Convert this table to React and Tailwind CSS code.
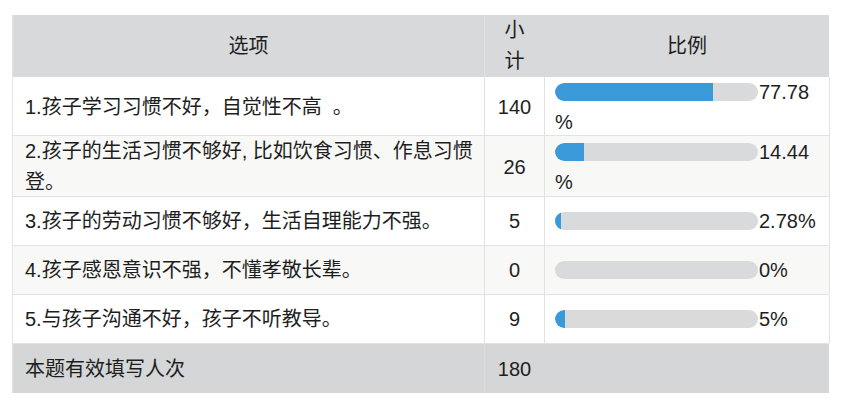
const font = { fontFamily: '"Liberation Sans", "Noto Sans CJK SC", sans-serif' };

const rows = [
  { label: ['1.孩子学习习惯不好，自觉性不高  。'], count: 140, pct: 77.78, text: ['77.78', '%'], h: 'h-[59px]', bg: 'bg-white' },
  { label: ['2.孩子的生活习惯不够好, 比如饮食习惯、作息习惯', '登。'], count: 26, pct: 14.44, text: ['14.44', '%'], h: 'h-[61px]', bg: 'bg-[#f8f8f7]' },
  { label: ['3.孩子的劳动习惯不够好，生活自理能力不强。'], count: 5, pct: 2.78, text: ['2.78%'], h: 'h-[49px]', bg: 'bg-white' },
  { label: ['4.孩子感恩意识不强，不懂孝敬长辈。'], count: 0, pct: 0, text: ['0%'], h: 'h-[49px]', bg: 'bg-[#f8f8f7]' },
  { label: ['5.与孩子沟通不好，孩子不听教导。'], count: 9, pct: 5, text: ['5%'], h: 'h-[49px]', bg: 'bg-white' },
];

const Bar = ({ pct }) => (
  <div className="relative h-[18px] w-[203px] shrink-0 overflow-hidden rounded-full bg-[#d9dadc]">
    {pct > 0 && (
      <div className="absolute inset-y-0 left-0 rounded-l-full bg-[#3a9ad9]" style={{ width: `${pct}%` }} />
    )}
  </div>
);

export default function App() {
  return (
    <div className="h-[404px] w-[845px] overflow-hidden bg-white pl-[12px] pt-[15px] text-[20px] text-[#1e1e1e]" style={font}>
      <div className="w-[817px] border-l border-[#e4e4e4]">
        {/* header */}
        <div className="grid h-[62px] grid-cols-[471px_60px_286px] bg-[#d8d9db]">
          <div className="flex items-center justify-center">选项</div>
          <div className="flex items-center justify-center border-l border-[#e2e2e2] text-center leading-[31px]">
            小<br />计
          </div>
          <div className="flex items-center justify-center">比例</div>
        </div>

        {rows.map((r, i) => (
          <div key={i} className={`grid grid-cols-[471px_60px_286px] border-b border-[#e2e2e2] ${r.h} ${r.bg}`}>
            <div className="flex flex-col justify-center pl-[12px] leading-[31px]">
              {r.label.map((l, j) => (
                <span key={j} className="whitespace-pre">{l}</span>
              ))}
            </div>
            <div className="flex items-center justify-center border-l border-[#e2e2e2]">{r.count}</div>
            <div className="flex flex-col justify-center border-l border-r border-[#e2e2e2] pl-[10px] leading-[30px]">
              <div className="flex items-center">
                <Bar pct={r.pct} />
                <span className="ml-px">{r.text[0]}</span>
              </div>
              {r.text[1] && <div>{r.text[1]}</div>}
            </div>
          </div>
        ))}

        {/* footer */}
        <div className="grid h-[49px] grid-cols-[471px_60px_286px] bg-[#d5d6d8]">
          <div className="flex items-center pl-[12px]">本题有效填写人次</div>
          <div className="flex items-center justify-center border-l border-[#dcdcdc]">180</div>
          <div />
        </div>
      </div>
    </div>
  );
}
